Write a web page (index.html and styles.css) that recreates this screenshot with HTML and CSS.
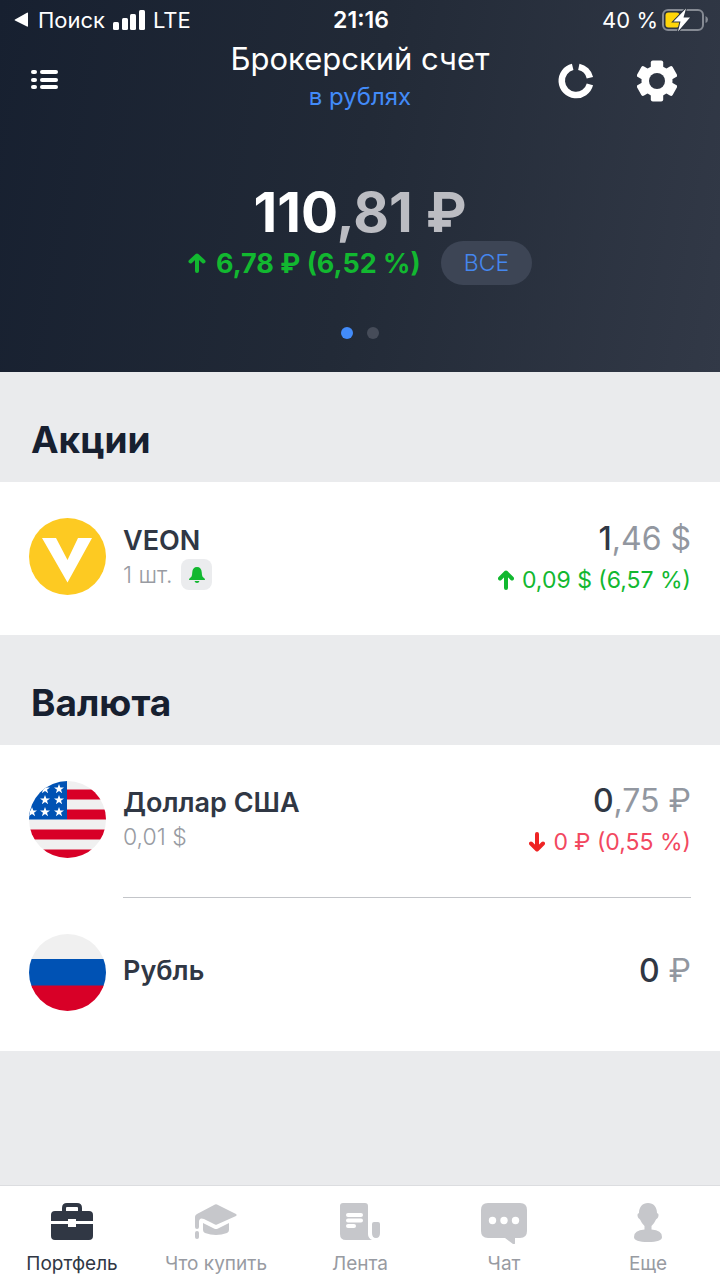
FILE: index.html
```html
<!DOCTYPE html>
<html lang="ru">
<head>
<meta charset="utf-8">
<meta name="viewport" content="width=device-width, initial-scale=1">
<title>Брокерский счет</title>
<link rel="stylesheet" href="styles.css">
</head>
<body>
<header class="hero">
  <div class="status">
    <div class="status-left">
      <svg width="16" height="16" viewBox="0 0 16 16" fill="currentColor"><path d="M14 1.2V14Q14 15 13 14.500L1 8.600Q0 8 1 7.400L13 .7Q14 .3 14 1.200Z"/></svg>
      <span>Поиск</span>
      <svg width="32" height="20" viewBox="0 0 32 20" fill="currentColor"><rect x="0" y="12" width="6" height="8" rx="1.500"/><rect x="9" y="8" width="6" height="12" rx="1.500"/><rect x="17" y="4" width="6" height="16" rx="1.500"/><rect x="26" y="0" width="6" height="20" rx="1.500"/></svg>
      <span>LTE</span>
    </div>
    <time class="clock">21:16</time>
    <div class="status-right">
      <span>40 %</span>
      <svg width="46" height="24" viewBox="0 0 46 24"><rect x="1" y="2" width="40" height="20" rx="5" fill="none" stroke="#858a93" stroke-width="2"/><path d="M43.500 8v7q2.500-1 2.500-3.500T43.500 8Z" fill="#858a93"/><rect x="3.500" y="4.500" width="14" height="15" rx="3" fill="#ffd60a"/><path d="M24 .5 11.500 13.500h7L16 23.500 28 9.500h-6.500Z" fill="#fff" stroke="#2c3441" stroke-width="2" paint-order="stroke"/></svg>
    </div>
  </div>
  <div class="nav">
    <button class="icon-button" aria-label="Список счетов">
      <svg width="28" height="22" viewBox="0 0 28 22" fill="currentColor"><rect x="0" y="1" width="6" height="4" rx="2"/><rect x="0" y="9" width="6" height="4" rx="2"/><rect x="0" y="16" width="6" height="4" rx="2"/><rect x="9" y="1" width="18" height="4" rx="2"/><rect x="9" y="9" width="18" height="4" rx="2"/><rect x="9" y="16" width="18" height="4" rx="2"/></svg>
    </button>
    <div class="heading">
      <h1>Брокерский счет</h1>
      <a href="#currency">в рублях</a>
    </div>
    <div class="actions">
      <button class="icon-button" aria-label="Аналитика">
        <svg width="36" height="36" viewBox="0 0 36 36" fill="none" stroke="currentColor" stroke-width="6.500"><path d="M14.700 3.900A14.300 14.300 0 1 0 31.900 21.400M20.800 3.900A14.300 14.300 0 0 1 31.900 14.700"/></svg>
      </button>
      <button class="icon-button" aria-label="Настройки">
        <svg width="40" height="42" viewBox="0 0 40 42"><g fill="currentColor"><circle cx="20" cy="21" r="15.500"/><rect id="tooth" x="13.800" y=".5" width="12.400" height="12" rx="2"/><use href="#tooth" transform="rotate(60 20 21)"/><use href="#tooth" transform="rotate(120 20 21)"/><use href="#tooth" transform="rotate(180 20 21)"/><use href="#tooth" transform="rotate(240 20 21)"/><use href="#tooth" transform="rotate(300 20 21)"/></g><circle cx="20" cy="21" r="8" fill="#2e3542"/></svg>
      </button>
    </div>
  </div>
  <div class="balance">
    <p class="total">110<span>,81 ₽</span></p>
    <div class="result">
      <p class="gain">
        <svg width="18" height="20" viewBox="0 0 18 20" fill="none" stroke="currentColor" stroke-width="4" stroke-linecap="round" stroke-linejoin="round"><path d="M9 18V3M2.500 8.500 9 2.500l6.500 6"/></svg>
        <span>6,78 ₽ (6,52 %)</span>
      </p>
      <button class="pill">ВСЕ</button>
    </div>
  </div>
  <div class="dots"><i class="dot active"></i><i class="dot"></i></div>
</header>

<main>
  <section>
    <h2>Акции</h2>
    <ul class="list">
      <li class="row">
        <svg class="logo" viewBox="0 0 77 77"><circle cx="38.500" cy="38.500" r="38.500" fill="#fdca22"/><path d="M13 20h14l11.500 22L49 20H63L38.500 64.500Z" fill="#fff"/></svg>
        <div class="cells">
          <div class="asset">
            <h3>VEON</h3>
            <p class="quantity">1 шт.
              <button class="bell" aria-label="Уведомления"><svg width="16" height="16" viewBox="0 0 16 16" fill="currentColor"><path d="M8 0C11 0 12.500 2 12.700 5L13 8Q13.200 10 15 11Q16 11.700 16 13H0Q0 11.700 1 11Q2.800 10 3 8L3.300 5C3.500 2 5 0 8 0ZM5.500 14h5Q10 16 8 16T5.500 14Z"/></svg></button>
            </p>
          </div>
          <div class="value">
            <p class="amount">1<span>,46 $</span></p>
            <p class="change up">
              <svg width="16" height="20" viewBox="0 0 16 20" fill="none" stroke="currentColor" stroke-width="4" stroke-linecap="round" stroke-linejoin="round"><path d="M8 18V3M2 8.500 8 2.500l6 6"/></svg>
              <span>0,09 $ (6,57 %)</span>
            </p>
          </div>
        </div>
      </li>
    </ul>
  </section>
  <section id="currency">
    <h2>Валюта</h2>
    <ul class="list">
      <li class="row">
        <svg class="logo" viewBox="0 0 77 77">
          <defs>
            <clipPath id="round"><circle cx="38.500" cy="38.500" r="38.500"/></clipPath>
            <path id="star" d="M0-5 1.300-1.600 5-1.600 2 .7 3.200 4.200 0 2-3.200 4.200-2 .7-5-1.600-1.300-1.600Z" fill="#fff"/>
          </defs>
          <g clip-path="url(#round)">
            <path fill="#f0f0f0" d="M0 0h77v77H0z"/>
            <path fill="#d80027" d="M38 8.500h39v10H38zM38 28.500h39v10H38zM0 48.500h77v10H0zM0 68.500h77v10H0z"/>
            <path fill="#0052b4" d="M0 0h38v38.500H0z"/>
            <use href="#star" x="16" y="8"/><use href="#star" x="30" y="8"/>
            <use href="#star" x="16" y="19"/><use href="#star" x="30" y="19"/>
            <use href="#star" x="3" y="31"/><use href="#star" x="16" y="31"/><use href="#star" x="30" y="31"/>
          </g>
        </svg>
        <div class="cells">
          <div class="asset">
            <h3>Доллар США</h3>
            <p class="quantity">0,01 $</p>
          </div>
          <div class="value">
            <p class="amount">0<span>,75 ₽</span></p>
            <p class="change down">
              <svg width="16" height="20" viewBox="0 0 16 20" fill="none" stroke="currentColor" stroke-width="4" stroke-linecap="round" stroke-linejoin="round"><path d="M8 2v15M2 11.500l6 6 6-6"/></svg>
              <span>0 ₽ (0,55 %)</span>
            </p>
          </div>
        </div>
      </li>
      <li class="row">
        <svg class="logo" viewBox="0 0 77 77"><g clip-path="url(#round)"><path fill="#f0f0f0" d="M0 0h77v25H0z"/><path fill="#0052b4" d="M0 25h77v27H0z"/><path fill="#d80027" d="M0 51.500h77V77H0z"/></g></svg>
        <div class="cells single">
          <h3>Рубль</h3>
          <p class="amount">0<span> ₽</span></p>
        </div>
      </li>
    </ul>
  </section>
</main>

<nav class="tabs">
  <a class="tab current" href="#portfolio">
    <svg width="44" height="42" viewBox="0 0 44 42"><path d="M14 11V6q0-3 3-3h10q3 0 3 3v5" fill="none" stroke="currentColor" stroke-width="4"/><path d="M5 9h34q4 0 4 4v6H26v-2h-8v2H1v-6q0-4 4-4ZM1 22h17v3h8v-3h17v12q0 4-4 4H5q-4 0-4-4Z" fill="currentColor"/></svg>
    <span>Портфель</span>
  </a>
  <a class="tab" href="#buy">
    <svg width="44" height="42" viewBox="0 0 44 42" fill="currentColor"><path d="M21 2.500Q22 2 23 2.500L42 12q1.500 1 0 2L23 22.500q-1 .5-2 0L10 17q-5-2-5 3v5Q5 27 3 27T1 25V15q0-2 2-3ZM9 21l11 5.500q2 1 4 0L35 21v7q0 2-2 3-11 4-22 0-2-1-2-3Z"/><rect x="1" y="29" width="4" height="8" rx="2"/></svg>
    <span>Что купить</span>
  </a>
  <a class="tab" href="#feed">
    <svg width="42" height="42" viewBox="0 0 42 42"><path fill="currentColor" d="M4 1h22q3 0 3 3v28q0 4 4 6H7q-6 0-6-6V4q0-3 3-3ZM35 20h4q2 0 2 2v9q0 5-4 5t-4-5v-9q0-2 2-2Z"/><path d="M9 13h13M9 18.500h13M9 24h6" fill="none" stroke="#fff" stroke-width="4" stroke-linecap="round"/></svg>
    <span>Лента</span>
  </a>
  <a class="tab" href="#chat">
    <svg width="46" height="42" viewBox="0 0 46 42"><path fill="currentColor" d="M7 1h32q7 0 7 7v21q0 7-7 7h-5v5q0 2-2 1l-8-6H7q-7 0-7-7V8q0-7 7-7Z"/><g fill="#fff"><circle cx="11.500" cy="18.500" r="3.700"/><circle cx="23" cy="18.500" r="3.700"/><circle cx="34.500" cy="18.500" r="3.700"/></g></svg>
    <span>Чат</span>
  </a>
  <a class="tab" href="#more">
    <svg width="28" height="42" viewBox="0 0 28 42" fill="currentColor"><path d="M14 1C19.500 1 23 5 23 11q2 .5 1.500 3-.5 2.500-2.500 3.500Q20.500 21 17.500 24v3.500Q28 28 28 35q0 5-14 5T0 35q0-7 10.500-7.500V24Q7.500 21 6 17.500q-2-1-2.500-3.500Q3 11.500 5 11C5 5 8.500 1 14 1Z"/></svg>
    <span>Еще</span>
  </a>
</nav>
</body>
</html>
```

FILE: styles.css
```css
* {
  box-sizing: border-box;
  margin: 0;
  padding: 0;
}

body {
  min-height: 100vh;
  display: flex;
  flex-direction: column;
  background: #eaebed;
  color: #303744;
  font-family: Inter, "Liberation Sans", sans-serif;
}

svg {
  display: block;
  flex: none;
}

button {
  border: 0;
  background: none;
  color: inherit;
  font: inherit;
  cursor: pointer;
}

a {
  color: inherit;
  text-decoration: none;
}

/* Header */
.hero {
  min-height: 372px;
  background: linear-gradient(100deg, #172030, #222a37 50%, #323947);
  color: #fff;
}

.status {
  display: grid;
  grid-template-columns: 1fr auto 1fr;
  align-items: center;
  height: 40px;
  padding: 0 12px 0 14px;
  font-size: 22px;
}

.status-left,
.status-right {
  display: flex;
  align-items: center;
  gap: 8px;
}

.status-right {
  justify-content: flex-end;
  gap: 4px;
}

.clock {
  font-size: 23px;
  font-weight: 600;
}

.nav {
  display: grid;
  grid-template-columns: 1fr auto 1fr;
  align-items: center;
  height: 80px;
  padding: 0 31px;
}

.icon-button {
  justify-self: start;
}

.heading {
  text-align: center;
}

h1 {
  font-size: 31px;
  font-weight: 400;
  line-height: 38px;
}

.heading a {
  display: block;
  padding-bottom: 4px;
  color: #428bf9;
  font-size: 24px;
  line-height: 38px;
}

.actions {
  display: flex;
  justify-content: flex-end;
  align-items: center;
  gap: 43px;
  padding: 2px 12px 0 0;
}

.balance {
  padding-top: 62px;
  text-align: center;
}

.total {
  font-size: 55px;
  font-weight: 700;
  line-height: 60px;
}

.total span {
  color: #bbbcc2;
}

.result {
  display: flex;
  justify-content: center;
  align-items: center;
  gap: 20px;
  height: 42px;
}

.gain {
  display: flex;
  align-items: center;
  gap: 10px;
  color: #12b830;
  font-size: 27px;
  font-weight: 700;
}

.pill {
  height: 44px;
  padding: 0 23px;
  border-radius: 22px;
  background: #3d4555;
  color: #4587ef;
  font-size: 23px;
  font-weight: 300;
}

.dots {
  display: flex;
  justify-content: center;
  gap: 14px;
  margin-top: 43px;
}

.dot {
  width: 12px;
  height: 12px;
  border-radius: 50%;
  background: #464c59;
}

.dot.active {
  background: #428bf9;
}

/* Holdings */
main {
  flex: 1;
}

h2 {
  padding: 44px 31px 18px;
  color: #172030;
  font-size: 37px;
  font-weight: 700;
  line-height: 48px;
}

.list {
  list-style: none;
  background: #fff;
}

.row {
  display: flex;
  gap: 17px;
  padding: 0 29px;
}

.logo {
  width: 77px;
  height: 77px;
  margin-top: 36px;
}

.cells {
  flex: 1;
  display: flex;
  justify-content: space-between;
  align-items: center;
  height: 153px;
  padding-bottom: 4px;
}

.single {
  padding-bottom: 8px;
}

.row:not(:last-child) .cells {
  border-bottom: 1px solid #c3c5c9;
}

h3 {
  font-size: 27px;
  font-weight: 600;
  line-height: 36px;
}

.quantity {
  display: flex;
  align-items: center;
  gap: 9px;
  height: 32px;
  color: #989ba2;
  font-size: 23px;
  font-weight: 300;
}

.bell {
  display: grid;
  place-items: center;
  width: 31px;
  height: 31px;
  border-radius: 8px;
  background: #ebecee;
  color: #12b830;
}

.value {
  padding-top: 6px;
  text-align: right;
}

.amount {
  font-size: 32px;
  font-weight: 500;
  line-height: 40px;
}

.amount span {
  color: #9297a0;
  font-weight: 400;
}

.change {
  display: flex;
  justify-content: flex-end;
  align-items: center;
  gap: 8px;
  font-size: 23px;
  line-height: 42px;
}

.up {
  color: #12b830;
}

.down {
  color: #f2485f;
}

.down svg {
  color: #ee2424;
}

/* Bottom navigation */
.tabs {
  display: grid;
  grid-template-columns: repeat(5, 1fr);
  min-height: 95px;
  padding-top: 16px;
  border-top: 1px solid #dcdde0;
  background: #fff;
}

.tab {
  display: flex;
  flex-direction: column;
  align-items: center;
  gap: 8px;
  color: #989ba2;
  font-size: 19px;
  line-height: 24px;
}

.tab svg {
  color: #c6c7cb;
}

.current,
.current svg {
  color: #303744;
}
```
